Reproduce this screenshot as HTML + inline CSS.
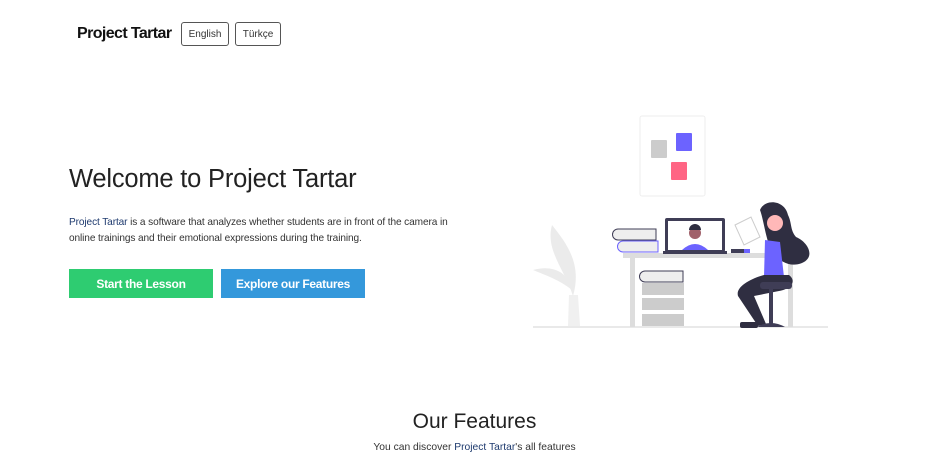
<!DOCTYPE html>
<html><head><meta charset="utf-8"><style>
*{margin:0;padding:0;box-sizing:border-box}
body{width:943px;height:470px;background:#fff;font-family:"Liberation Sans",sans-serif;color:#212529;position:relative;overflow:hidden}
.a{position:absolute;white-space:nowrap}
.btn{position:absolute;border:1px solid #555;border-radius:3px;font-size:10px;color:#333;display:flex;align-items:center;justify-content:center}
.cta{position:absolute;color:#fff;font-size:12px;font-weight:bold;display:flex;align-items:center;justify-content:center;letter-spacing:-0.3px}
</style></head><body>
<div class="a" style="left:77px;top:25px;font-size:16px;font-weight:bold;letter-spacing:-0.6px;color:#111">Project Tartar</div>
<div class="btn" style="left:181px;top:22px;width:48px;height:24px">English</div>
<div class="btn" style="left:235px;top:22px;width:46px;height:24px">Türkçe</div>
<div class="a" style="left:69px;top:165px;font-size:25.5px;color:#222;letter-spacing:-0.2px">Welcome to Project Tartar</div>
<div class="a" style="left:69px;top:215px;font-size:10.1px;line-height:16px;color:#333;letter-spacing:-0.1px"><span style="color:#1e3a6e">Project Tartar</span> is a software that analyzes whether students are in front of the camera in<br>online trainings and their emotional expressions during the training.</div>
<div class="cta" style="left:69px;top:269px;width:144px;height:29px;background:#2ecc71">Start the Lesson</div>
<div class="cta" style="left:221px;top:269px;width:144px;height:29px;background:#3498db">Explore our Features</div>
<svg class="a" style="left:520px;top:110px" width="320" height="225" viewBox="520 110 320 225">
<rect x="640" y="116" width="65" height="80" rx="2" fill="#fff" stroke="#eee"/>
<rect x="651" y="140" width="16" height="18" rx="1" fill="#ccc"/>
<rect x="676" y="133" width="16" height="18" rx="1" fill="#6c63ff"/>
<rect x="671" y="162" width="16" height="18" rx="1" fill="#ff6584"/>
<line x1="533" y1="327" x2="828" y2="327" stroke="#e2e2e2" stroke-width="1.5"/>
<path d="M569 295 L578 295 L580 326 L568 326 Z" fill="#f0f0f0"/>
<path d="M573 296 C565 270 545 250 552 225 C568 245 582 265 573 296 Z" fill="#ebebeb"/>
<path d="M572 290 C560 280 545 275 533 270 C550 265 568 270 572 290 Z" fill="#ebebeb"/>
<rect x="623" y="253" width="172" height="5" fill="#ddd"/>
<rect x="630" y="258" width="5" height="69" fill="#ddd"/>
<rect x="788" y="258" width="5" height="69" fill="#ddd"/>
<rect x="642" y="283" width="42" height="12" fill="#ccc"/>
<rect x="642" y="298" width="42" height="12" fill="#ccc"/>
<rect x="642" y="314" width="42" height="12" fill="#ccc"/>
<path d="M645 271 h38 v11 h-38 a5 5 0 0 1 0 -11z" fill="#eee" stroke="#3f3d56"/>
<path d="M618 229 h38 v11 h-38 a5 5 0 0 1 0 -11z" fill="#eee" stroke="#3f3d56"/>
<path d="M623 241 h35 v11 h-35 a5 5 0 0 1 0 -11z" fill="#eee" stroke="#6c63ff"/>
<rect x="665" y="218" width="60" height="34" rx="2" fill="#3f3d56"/>
<rect x="668" y="221" width="54" height="29" fill="#fff"/>
<rect x="663" y="251" width="64" height="3" fill="#3f3d56"/>
<circle cx="695" cy="233" r="6" fill="#a0616a"/>
<path d="M689 230 a6 6 0 0 1 12 0 z" fill="#2f2e41"/>
<path d="M682 250 q13 -12 26 0 z" fill="#6c63ff"/>
<rect x="731" y="249" width="18" height="4" fill="#3f3d56"/>
<rect x="744" y="249" width="6" height="4" fill="#6c63ff"/>
<path d="M735 225 l16 -8 l9 20 l-16 8 z" fill="#fff" stroke="#ccc"/>
<path d="M760 210 c5 -12 25 -10 28 5 c4 8 2 15 8 22 c12 5 20 20 6 26 c-12 5 -24 -2 -30 -12 c-6 -10 -8 -30 -12 -41 z" fill="#2f2e41"/>
<circle cx="775" cy="223" r="8" fill="#ffb8b8"/>
<path d="M765 240 l15 2 l4 35 l-20 0 z" fill="#6c63ff"/>
<path d="M764 275 l25 0 c8 6 2 14 -10 16 l-25 5 l12 28 l-8 2 l-20 -30 c-3 -10 15 -18 26 -21 z" fill="#2f2e41"/>
<rect x="760" y="282" width="32" height="7" rx="3" fill="#3f3d56"/>
<rect x="769" y="289" width="4" height="36" fill="#3f3d56"/>
<path d="M757 327 q14 -8 28 0 z" fill="#3f3d56"/>
<rect x="740" y="322" width="18" height="6" rx="2" fill="#2f2e41"/>
</svg>
<div class="a" style="left:0;width:949px;text-align:center;top:410px;font-size:21px;color:#222">Our Features</div>
<div class="a" style="left:0;width:949px;text-align:center;top:442px;font-size:10.3px;color:#333">You can discover <span style="color:#1e3a6e">Project Tartar</span>'s all features</div>
</body></html>
